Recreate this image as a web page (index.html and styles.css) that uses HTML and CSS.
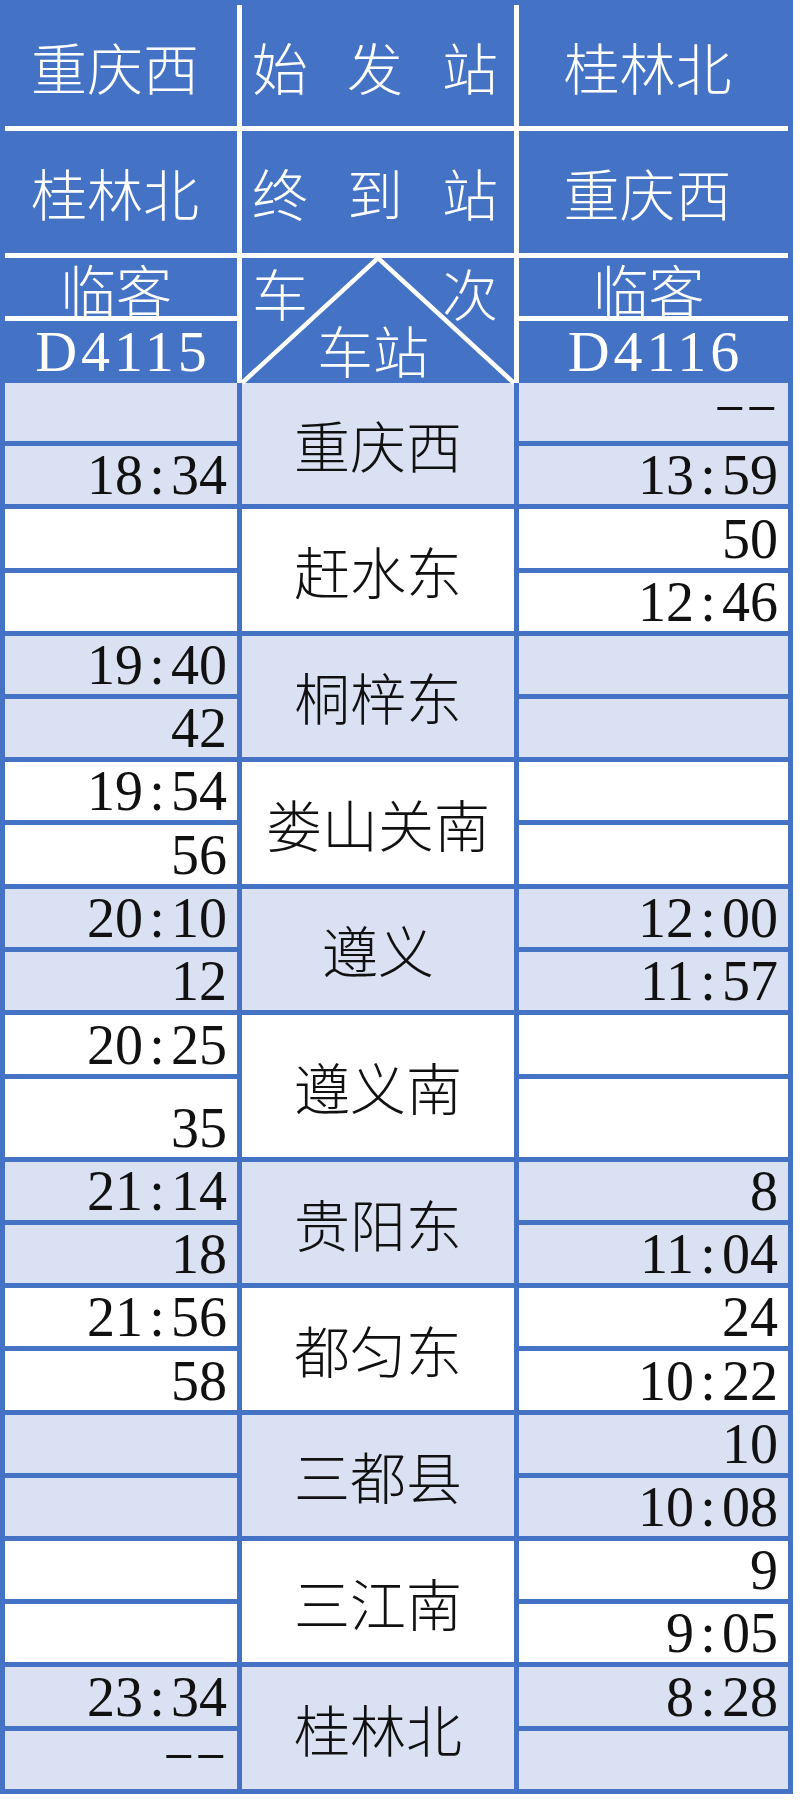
FILE: index.html
```html
<!DOCTYPE html>
<html lang="zh-CN">
<head>
<meta charset="utf-8">
<title>D4115 / D4116 时刻表</title>
<link rel="stylesheet" href="styles.css">
</head>
<body>
<div class="sheet">
  <div class="head">
    <div class="hgrid">
      <div class="hc name">重庆西</div>
      <div class="hc spread"><span>始</span><span>发</span><span>站</span></div>
      <div class="hc name">桂林北</div>
      <div class="hc name">桂林北</div>
      <div class="hc spread"><span>终</span><span>到</span><span>站</span></div>
      <div class="hc name">重庆西</div>
      <div class="hc kind">临客</div>
      <div class="hc diag">
        <svg viewBox="0 0 272 125" preserveAspectRatio="none" aria-hidden="true"><polyline points="0,125 136,0 272,125" fill="none" stroke="#ffffff" stroke-width="4.5"/></svg>
        <div class="dtop"><span>车</span><span>次</span></div>
        <div class="dbot">车站</div>
      </div>
      <div class="hc kind">临客</div>
      <div class="hc code">D4115</div>
      <div class="hc code">D4116</div>
    </div>
  </div>

  <div class="tbl">
    <!-- 重庆西 -->
    <div class="c lt"></div>
    <div class="c st lt">重庆西</div>
    <div class="c lt"><span class="dash">--</span></div>
    <div class="c lt"><span>18<i>:</i>34</span></div>
    <div class="c lt"><span>13<i>:</i>59</span></div>
    <!-- 赶水东 -->
    <div class="c wt"></div>
    <div class="c st wt">赶水东</div>
    <div class="c wt"><span>50</span></div>
    <div class="c wt"></div>
    <div class="c wt"><span>12<i>:</i>46</span></div>
    <!-- 桐梓东 -->
    <div class="c lt"><span>19<i>:</i>40</span></div>
    <div class="c st lt">桐梓东</div>
    <div class="c lt"></div>
    <div class="c lt"><span>42</span></div>
    <div class="c lt"></div>
    <!-- 娄山关南 -->
    <div class="c wt"><span>19<i>:</i>54</span></div>
    <div class="c st wt">娄山关南</div>
    <div class="c wt"></div>
    <div class="c wt"><span>56</span></div>
    <div class="c wt"></div>
    <!-- 遵义 -->
    <div class="c lt"><span>20<i>:</i>10</span></div>
    <div class="c st lt">遵义</div>
    <div class="c lt"><span>12<i>:</i>00</span></div>
    <div class="c lt"><span>12</span></div>
    <div class="c lt"><span>11<i>:</i>57</span></div>
    <!-- 遵义南 -->
    <div class="c wt"><span>20<i>:</i>25</span></div>
    <div class="c st wt">遵义南</div>
    <div class="c wt"></div>
    <div class="c wt"><span>35</span></div>
    <div class="c wt"></div>
    <!-- 贵阳东 -->
    <div class="c lt"><span>21<i>:</i>14</span></div>
    <div class="c st lt">贵阳东</div>
    <div class="c lt"><span>8</span></div>
    <div class="c lt"><span>18</span></div>
    <div class="c lt"><span>11<i>:</i>04</span></div>
    <!-- 都匀东 -->
    <div class="c wt"><span>21<i>:</i>56</span></div>
    <div class="c st wt">都匀东</div>
    <div class="c wt"><span>24</span></div>
    <div class="c wt"><span>58</span></div>
    <div class="c wt"><span>10<i>:</i>22</span></div>
    <!-- 三都县 -->
    <div class="c lt"></div>
    <div class="c st lt">三都县</div>
    <div class="c lt"><span>10</span></div>
    <div class="c lt"></div>
    <div class="c lt"><span>10<i>:</i>08</span></div>
    <!-- 三江南 -->
    <div class="c wt"></div>
    <div class="c st wt">三江南</div>
    <div class="c wt"><span>9</span></div>
    <div class="c wt"></div>
    <div class="c wt"><span>9<i>:</i>05</span></div>
    <!-- 桂林北 -->
    <div class="c lt"><span>23<i>:</i>34</span></div>
    <div class="c st lt">桂林北</div>
    <div class="c lt"><span>8<i>:</i>28</span></div>
    <div class="c lt"><span class="dash">--</span></div>
    <div class="c lt"></div>
  </div>
</div>
</body>
</html>
```

FILE: styles.css
```css
* {
  box-sizing: border-box;
}

html,
body {
  margin: 0;
  padding: 0;
  background: #ffffff;
}

.sheet {
  width: 793px;
}

/* ---------- header ---------- */
.head {
  background: #4472c4;
  padding: 5px 5px 0 5px;
}

.hgrid {
  display: grid;
  grid-template-columns: 232px 272px 269px;
  grid-template-rows: 121px 122px 58px 62px;
  gap: 5px;
  background: #ffffff;
}

.hc {
  background: #4472c4;
  color: #ffffff;
  display: flex;
  align-items: center;
  justify-content: center;
  font-family: "Noto Sans CJK SC", sans-serif;
  font-weight: 300;
  font-size: 56px;
  line-height: 1;
}

.name {
  padding-right: 12px;
}

.spread {
  justify-content: space-between;
  padding: 0 16px 0 10px;
}

.kind {
  align-items: flex-end;
  padding-right: 10px;
}

.code {
  font-family: "Liberation Serif", serif;
  font-weight: 400;
  font-size: 58px;
  letter-spacing: 4px;
  padding-left: 4px;
}

.diag {
  grid-column: 2;
  grid-row: 3 / span 2;
  position: relative;
  flex-direction: column;
  align-items: stretch;
  justify-content: space-between;
  padding: 6px 16px 6px 10px;
}

.diag svg {
  position: absolute;
  left: 0;
  top: 0;
  width: 100%;
  height: 100%;
  overflow: visible;
}

.dtop {
  display: flex;
  justify-content: space-between;
}

.dbot {
  text-align: center;
  padding-right: 4px;
}

/* ---------- body table ---------- */
.tbl {
  background: #4472c4;
  padding: 0 5px 5px 5px;
  display: grid;
  grid-template-columns: 232px 272px 269px;
  grid-template-rows: repeat(10, 58.2px) 59px 78px repeat(10, 58.2px);
  gap: 5px;
}

.c {
  display: flex;
  justify-content: flex-end;
  align-items: flex-end;
  padding: 0 10px 1px 0;
  font-family: "Liberation Serif", serif;
  font-size: 56px;
  line-height: 1;
  color: #111111;
}

.c i {
  font-style: normal;
  display: inline-block;
  width: 0.5em;
  text-align: center;
}

.st {
  grid-row: span 2;
  justify-content: center;
  align-items: center;
  padding: 0;
  font-family: "Noto Sans CJK SC", sans-serif;
  font-weight: 300;
  font-size: 56px;
}

.dash {
  font-size: 40px;
  letter-spacing: 0;
  display: inline-block;
  transform: translateY(-15px) scaleX(2.4);
  transform-origin: right center;
}

.lt {
  background: #d9e1f2;
}

.wt {
  background: #ffffff;
}
```
